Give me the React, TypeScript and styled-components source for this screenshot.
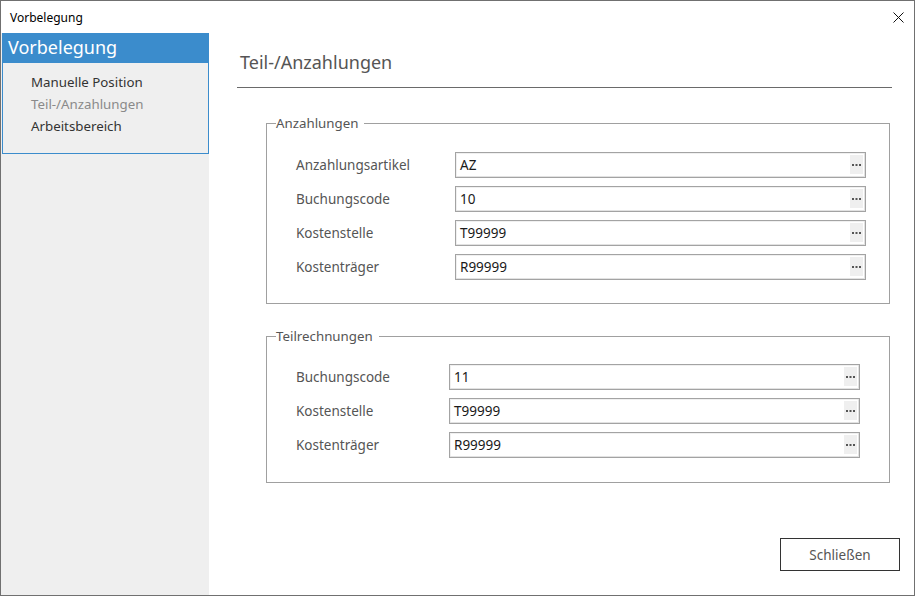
import React, { FC } from 'react';
import styled, { createGlobalStyle } from 'styled-components';

const GlobalStyle = createGlobalStyle`
    html, body {
        margin: 0;
        padding: 0;
        background: #ffffff;
    }
    body {
        font-family: 'Noto Sans', 'Open Sans', sans-serif;
    }
`;

const Vindu = styled.div`
    box-sizing: border-box;
    width: 915px;
    height: 596px;
    border: 1px solid #707070;
    display: flex;
    flex-direction: column;
    background: #ffffff;
`;

const Tittellinje = styled.div`
    height: 32px;
    flex: none;
    display: flex;
    align-items: center;
    justify-content: space-between;
    padding: 0 9px 0 9px;
    font-size: 12px;
    color: #000000;
`;

const LukkKryss = styled.svg`
    width: 11px;
    height: 11px;
    margin-right: 1px;
`;

const Innhold = styled.div`
    flex: 1;
    display: flex;
    min-height: 0;
`;

const Sidemeny = styled.nav`
    width: 207px;
    flex: none;
    background: #efefef;
    padding-left: 1px;
`;

const MenyHode = styled.div`
    height: 30px;
    background: #3b8ccc;
    color: #ffffff;
    font-size: 18px;
    line-height: 28px;
    padding-left: 6px;
`;

const MenyListe = styled.ul`
    list-style: none;
    margin: 0;
    padding: 8px 0 18px 28px;
    border: 1px solid #3b8ccc;
    border-top: none;
    height: 91px;
    box-sizing: border-box;
`;

const MenyPunkt = styled.li<{ $aktiv?: boolean }>`
    font-size: 13.3px;
    line-height: 22px;
    color: ${(p) => (p.$aktiv ? '#8a8a8a' : '#333333')};
`;

const Hovedfelt = styled.main`
    flex: 1;
    display: flex;
    flex-direction: column;
    padding: 0 22px 24px 28px;
    min-width: 0;
`;

const Sidetittel = styled.h1`
    margin: 0;
    padding: 17px 0 0 3px;
    height: 55px;
    box-sizing: border-box;
    font-size: 18px;
    font-weight: 400;
    color: #555555;
    border-bottom: 1px solid #6a6a6a;
`;

const Grupper = styled.div`
    display: flex;
    flex-direction: column;
    gap: 23px;
    margin: 26px 2px 0 29px;
`;

const Gruppe = styled.fieldset<{ $topp: number; $hoyre: number; $bunn: number }>`
    margin: 0;
    border: 1px solid #a0a0a0;
    padding: ${(p) => p.$topp}px ${(p) => p.$hoyre}px ${(p) => p.$bunn}px 29px;
    display: flex;
    flex-direction: column;
    gap: 8px;
`;

const Legende = styled.legend`
    font-size: 13.3px;
    color: #555555;
    padding: 0 6px 0 0;
    margin-left: -20px;
`;

const Rad = styled.div<{ $labelBredde: number }>`
    display: grid;
    grid-template-columns: ${(p) => p.$labelBredde}px 1fr;
    align-items: center;
`;

const Etikett = styled.label`
    font-size: 13.5px;
    color: #555555;
`;

const Felt = styled.div`
    position: relative;
    height: 26px;
    box-sizing: border-box;
    border: 1px solid #a3a3a3;
    box-shadow: inset -1px -1px 0 #e2e2e2, inset 1px 1px 0 #f0f0f0;
    background: #ffffff;
    display: flex;
    align-items: center;
    padding-left: 4px;
    font-size: 13.5px;
    color: #1a1a1a;
`;

const Velgknapp = styled.span`
    position: absolute;
    right: 2px;
    top: 2px;
    bottom: 3px;
    width: 13px;
    background: #efefef;
    display: flex;
    align-items: center;
    justify-content: center;
    padding-top: 2px;
    box-sizing: border-box;
`;

const Bunnlinje = styled.div`
    margin-top: auto;
    display: flex;
    justify-content: flex-end;
    margin-right: -8px;
`;

const Knapp = styled.button`
    width: 120px;
    height: 33px;
    border: 1px solid #333333;
    background: #ffffff;
    font-family: inherit;
    font-size: 13.5px;
    color: #555555;
    padding: 0;
`;

const Prikker: FC = () => (
    <svg width="9" height="3" viewBox="0 0 9 3">
        <rect x="0" y="0" width="2" height="2" fill="#555" />
        <rect x="3.5" y="0" width="2" height="2" fill="#555" />
        <rect x="7" y="0" width="2" height="2" fill="#555" />
    </svg>
);

interface Felt {
    label: string;
    verdi: string;
}

const anzahlungen: Felt[] = [
    { label: 'Anzahlungsartikel', verdi: 'AZ' },
    { label: 'Buchungscode', verdi: '10' },
    { label: 'Kostenstelle', verdi: 'T99999' },
    { label: 'Kostenträger', verdi: 'R99999' },
];

const teilrechnungen: Felt[] = [
    { label: 'Buchungscode', verdi: '11' },
    { label: 'Kostenstelle', verdi: 'T99999' },
    { label: 'Kostenträger', verdi: 'R99999' },
];

const FeltRad: FC<{ felt: Felt; labelBredde: number }> = ({ felt, labelBredde }) => (
    <Rad $labelBredde={labelBredde}>
        <Etikett>{felt.label}</Etikett>
        <Felt>
            {felt.verdi}
            <Velgknapp>
                <Prikker />
            </Velgknapp>
        </Felt>
    </Rad>
);

const App: FC = () => {
    return (
        <>
            <GlobalStyle />
            <Vindu>
                <Tittellinje>
                    <span>Vorbelegung</span>
                    <LukkKryss viewBox="0 0 11 11">
                        <path d="M0.5 0.5 L10.5 10.5 M10.5 0.5 L0.5 10.5" stroke="#111" strokeWidth="1" />
                    </LukkKryss>
                </Tittellinje>
                <Innhold>
                    <Sidemeny>
                        <MenyHode>Vorbelegung</MenyHode>
                        <MenyListe>
                            <MenyPunkt>Manuelle Position</MenyPunkt>
                            <MenyPunkt $aktiv>Teil-/Anzahlungen</MenyPunkt>
                            <MenyPunkt>Arbeitsbereich</MenyPunkt>
                        </MenyListe>
                    </Sidemeny>
                    <Hovedfelt>
                        <Sidetittel>Teil-/Anzahlungen</Sidetittel>
                        <Grupper>
                            <Gruppe $topp={20} $hoyre={23} $bunn={23}>
                                <Legende>Anzahlungen</Legende>
                                {anzahlungen.map((f) => (
                                    <FeltRad key={f.label} felt={f} labelBredde={159} />
                                ))}
                            </Gruppe>
                            <Gruppe $topp={19} $hoyre={29} $bunn={24}>
                                <Legende>Teilrechnungen</Legende>
                                {teilrechnungen.map((f) => (
                                    <FeltRad key={f.label} felt={f} labelBredde={153} />
                                ))}
                            </Gruppe>
                        </Grupper>
                        <Bunnlinje>
                            <Knapp>Schließen</Knapp>
                        </Bunnlinje>
                    </Hovedfelt>
                </Innhold>
            </Vindu>
        </>
    );
};

export default App;
